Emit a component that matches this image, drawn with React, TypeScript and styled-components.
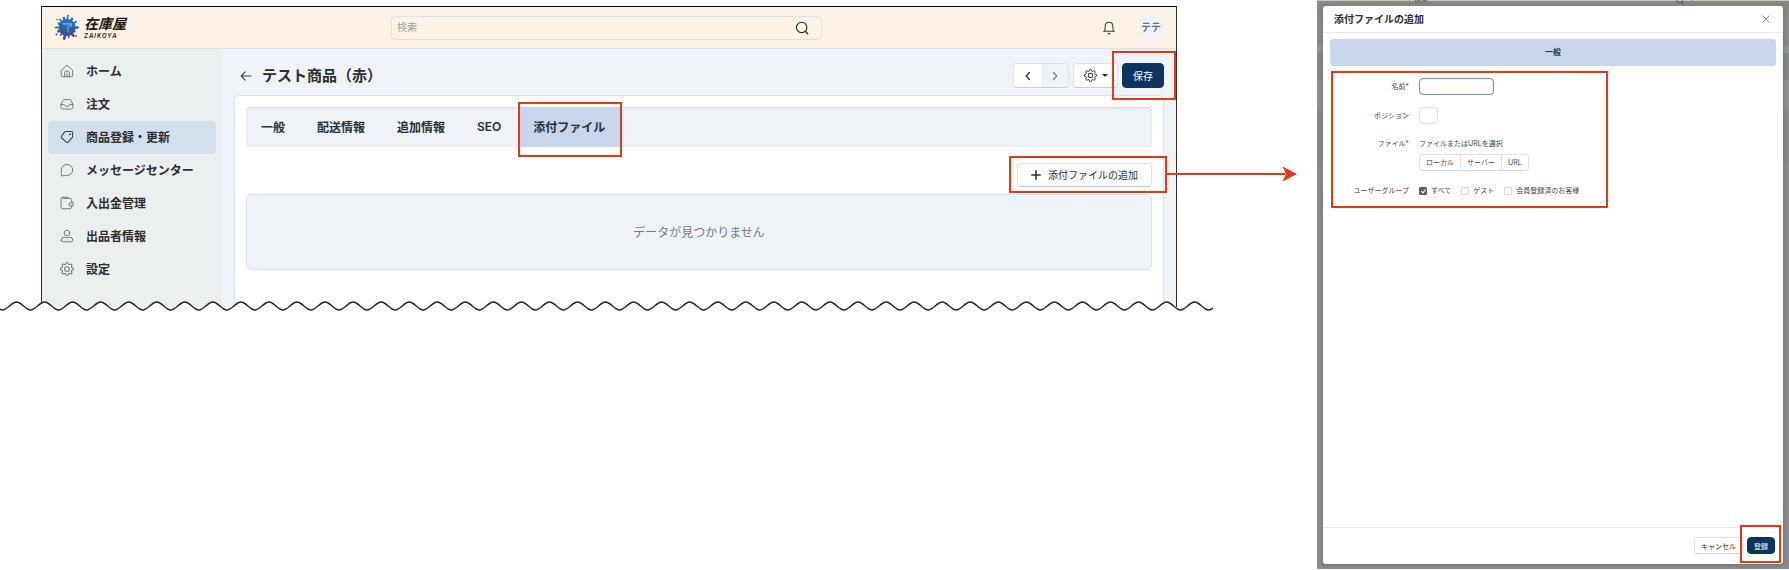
import React from "react";
import styled, { createGlobalStyle, css } from "styled-components";
import { BsGear } from "react-icons/bs";

const accent = "#e03a1b";
const navy = "#0b355f";
const line = "#dce1ee";
const ink = "#2b2d30";

const GlobalStyle = createGlobalStyle`
  *, *::before, *::after { box-sizing: border-box; }
  body {
    margin: 0;
    background: #fff;
    color: ${ink};
    font-family: Inter, "Noto Sans CJK JP", sans-serif;
    font-size: 12px;
  }
  button, input { font: inherit; color: inherit; margin: 0; }
  button { cursor: pointer; }
`;

const Page = styled.div`
  display: grid;
  grid-template-columns: minmax(0, 1213fr) minmax(0, 472fr);
  column-gap: 104px;
  min-height: 100vh;
  padding-bottom: 1px;
`;

/* ---------- shared ---------- */

const Callout = styled.span<{ $inset: string }>`
  position: absolute;
  inset: ${(p) => p.$inset};
  border: 2px solid ${accent};
  pointer-events: none;
  z-index: 3;
`;

const Marked = styled.div`
  position: relative;
  display: flex;
`;

const Icon = styled.svg<{ $size?: number }>`
  width: ${(p) => p.$size ?? 14}px;
  height: ${(p) => p.$size ?? 14}px;
  flex: none;
  fill: none;
  stroke: currentColor;
  stroke-width: 1;
  stroke-linecap: round;
  stroke-linejoin: round;
`;

const buttonBase = css`
  display: flex;
  align-items: center;
  justify-content: center;
  padding: 0;
  white-space: nowrap;
  background: #fff;
  border: 1px solid ${line};
`;

/* ---------- admin screen ---------- */

const Stage = styled.section`
  position: relative;
  align-self: start;
  padding: 6px 36px 4px 41px;
`;

const Screen = styled.div`
  border: 1px solid #2e2b28;
  border-top-color: #000;
  border-bottom: 0;
  background: #eff3f7;
`;

const TopBar = styled.header`
  display: grid;
  grid-template-columns: 337fr 431fr 342fr;
  align-items: center;
  height: 42px;
  padding: 0 12px;
  background: #fcf3e6;
  border-bottom: 1px solid ${line};
`;

const Brand = styled.a`
  display: flex;
  align-items: center;
  gap: 4px;
  color: #1c1512;
  text-decoration: none;
`;

const BrandText = styled.span`
  display: flex;
  flex-direction: column;
  font-style: italic;
`;

const BrandName = styled.span`
  font-size: 14px;
  line-height: 17px;
  font-weight: 700;
`;

const BrandSub = styled.span`
  font-size: 6px;
  line-height: 8px;
  font-weight: 600;
  letter-spacing: 1px;
`;

const SearchBox = styled.form`
  display: flex;
  align-items: center;
  height: 24px;
  border: 1px solid ${line};
  border-radius: 4px;
`;

const SearchInput = styled.input`
  flex: 1;
  min-width: 0;
  height: 22px;
  padding: 0 5px 2px;
  border: 0;
  outline: 0;
  background: none;
  font-size: 10px;
  &::placeholder { color: #a2a09c; opacity: 1; }
`;

const IconButton = styled.button`
  display: flex;
  align-items: center;
  padding: 0;
  border: 0;
  background: none;
  color: #3a3d40;
`;

const SearchButton = styled(IconButton)`
  margin-right: 12px;
  color: #1f1f1f;
`;

const TopActions = styled.div`
  display: flex;
  justify-content: flex-end;
  align-items: center;
  gap: 22px;
`;

const Avatar = styled.button`
  width: 26px;
  height: 26px;
  padding: 0 0 2px;
  border: 0;
  border-radius: 50%;
  background: #eff3f7;
  color: #6b6d70;
  font-size: 10px;
  font-weight: 600;
  line-height: 24px;
`;

const Workspace = styled.div`
  display: flex;
`;

const Sidebar = styled.nav`
  flex: none;
  width: 180px;
  padding: 6px;
  background: #ebefef;
`;

const NavItem = styled.a<{ $active?: boolean }>`
  display: flex;
  align-items: center;
  gap: 12px;
  height: 33px;
  padding: 0 12px 2px;
  border-radius: 4px;
  color: ${ink};
  font-weight: 600;
  white-space: nowrap;
  text-decoration: none;
  background: ${(p) => (p.$active ? "#d4dfec" : "none")};
  svg { color: ${(p) => (p.$active ? "#33373c" : "#66696c")}; }
`;

const Main = styled.main`
  flex: 1;
  min-width: 0;
  padding: 0 12px;
`;

const TitleRow = styled.div`
  display: flex;
  align-items: center;
  gap: 10px;
  padding: 14px 0 7px 6px;
`;

const Title = styled.h1`
  flex: 1;
  margin: 0;
  font-size: 15px;
  line-height: 25px;
  font-weight: 600;
`;

const Controls = styled.div`
  display: flex;
  gap: 4px;
`;

const Pager = styled.div`
  display: flex;
`;

const PageButton = styled.button`
  ${buttonBase}
  width: 28px;
  height: 25px;
  border-bottom-color: #c3cce0;
  &:first-child { border-radius: 4px 0 0 4px; border-right: 0; }
  &:last-child { border-radius: 0 4px 4px 0; background: #eff3f7; border-left: 0; color: #7b7e82; }
`;

const GearButton = styled.button`
  ${buttonBase}
  gap: 5px;
  width: 45px;
  height: 25px;
  border-radius: 4px;
  border-bottom-color: #c3cce0;
`;

const Caret = styled.span`
  border: 3px solid transparent;
  border-top-color: currentColor;
  border-bottom: 0;
`;

const PrimaryButton = styled.button<{ $small?: boolean }>`
  ${buttonBase}
  width: ${(p) => (p.$small ? 28 : 42)}px;
  height: ${(p) => (p.$small ? 17 : 25)}px;
  padding-bottom: ${(p) => (p.$small ? 0 : 1)}px;
  border-color: ${navy};
  border-radius: 4px;
  background: ${navy};
  color: #fff;
  font-size: ${(p) => (p.$small ? 7 : 10)}px;
`;

const Card = styled.section`
  padding: 11px 11px 37px 11px;
  background: #fff;
  border: 1px solid ${line};
  border-bottom: 0;
  border-radius: 5px 5px 0 0;
`;

const Tabs = styled.div`
  display: flex;
  height: 40px;
  border-radius: 4px;
  background: #eff3f7;
  box-shadow: inset 0 1px 2px #d3d9e2, inset 0 0 1px #d3d9e2;
`;

const Tab = styled.button<{ $active?: boolean }>`
  height: 40px;
  padding: 0 17px 2px 15px;
  border: 0;
  border-radius: 3px;
  background: ${(p) => (p.$active ? "#c8d5ec" : "none")};
  font-weight: 600;
  white-space: nowrap;
`;

const AddRow = styled.div`
  display: flex;
  justify-content: flex-end;
  padding: 16px 0 7px;
`;

const AddButton = styled.button`
  ${buttonBase}
  gap: 7px;
  width: 135px;
  height: 24px;
  padding-bottom: 1px;
  border-radius: 4px;
  border-bottom-color: #bccbe2;
  font-size: 10px;
`;

const Arrow = styled.svg`
  position: absolute;
  left: calc(100% + 15px);
  top: 3px;
  width: 130px;
  height: 16px;
  z-index: 3;
`;

const Empty = styled.p`
  display: flex;
  align-items: center;
  justify-content: center;
  height: 76px;
  margin: 0;
  padding-bottom: 2px;
  border: 1px solid ${line};
  border-radius: 5px;
  background: #eff3f7;
  color: #77797c;
`;

const TornEdge = styled.svg`
  position: absolute;
  left: 0;
  bottom: 0;
  width: 100%;
  height: 10px;
  z-index: 2;
`;

/* ---------- dialog ---------- */

const Backdrop = styled.section`
  position: relative;
  display: flex;
  padding: 6px 6px 5px;
  background: linear-gradient(
    #c9c9c9 1px, #8d897f 1px, #8d897f 14px, #8a8b8f 14px, #8a8b8f 46px,
    #959595 46px, #959595 53px, #858689 53px, #858689 80px, #8f8f8f 80px,
    #8f8f8f 111px, #87888b 111px, #87888b 162px, #8c8c8c 162px
  );
`;

const DimmedSearch = styled.div`
  position: absolute;
  top: 0;
  left: 92px;
  right: 96px;
  display: flex;
  align-items: flex-end;
  justify-content: space-between;
  height: 5px;
  padding: 0 8px 0 4px;
  overflow: hidden;
  border: 1px solid #878a90;
  border-top: 0;
  border-radius: 0 0 3px 3px;
  color: #68655f;
  font-size: 7px;
  line-height: 9px;
  svg { color: #3a3936; }
`;

const Dialog = styled.div`
  position: relative;
  flex: 1;
  min-width: 0;
  display: flex;
  flex-direction: column;
  background: #fff;
  border-radius: 3px;
  box-shadow: 0 1px 4px #55555599;
`;

const DialogHead = styled.header`
  display: flex;
  align-items: center;
  justify-content: space-between;
  height: 27px;
  padding: 0 13px 0 11px;
  border-bottom: 1px solid #e6e9f1;
`;

const DialogTitle = styled.h2`
  margin: 0;
  padding-bottom: 1px;
  font-size: 10px;
  font-weight: 600;
`;

const DialogBody = styled.div`
  flex: 1;
  padding: 6px 7px;
`;

const Section = styled.h3`
  margin: 0 0 5px;
  border-radius: 3px;
  background: #c9d6ed;
  font-size: 8px;
  line-height: 27px;
  font-weight: 600;
  text-align: center;
`;

const Form = styled.form`
  display: flex;
  flex-direction: column;
  gap: 12px;
  width: 277px;
  margin-left: 1px;
  padding: 5px 0 7px;
  border: 2px solid ${accent};
  color: #45474a;
  font-size: 7px;
`;

const Field = styled.div`
  display: flex;
  gap: 10px;
`;

const FieldLabel = styled.label<{ $line: number }>`
  width: 76px;
  line-height: ${(p) => p.$line}px;
  text-align: right;
  white-space: nowrap;
`;

const Required = styled.span`
  color: #e0324b;
`;

const TextInput = styled.input<{ $tiny?: boolean }>`
  width: ${(p) => (p.$tiny ? 19 : 75)}px;
  height: 17px;
  padding: 0 3px;
  border: 1px solid ${(p) => (p.$tiny ? line : "#7f93b0")};
  border-radius: 4px;
  outline: 0;
  box-shadow: ${(p) => (p.$tiny ? "none" : "inset 0 0 1px #7f93b0")};
`;

const FileChoice = styled.div`
  display: flex;
  flex-direction: column;
  gap: 3px;
  line-height: 15px;
`;

const Segments = styled.div`
  display: flex;
`;

const Segment = styled.button`
  ${buttonBase}
  height: 17px;
  padding: 0 6px;
  border-bottom-color: #cdd5e6;
  & + & { border-left: 0; }
  &:first-child { border-radius: 4px 0 0 4px; }
  &:last-child { border-radius: 0 4px 4px 0; }
`;

const Options = styled.div`
  display: flex;
  gap: 10px;
  line-height: 16px;
`;

const Option = styled.label`
  display: flex;
  align-items: center;
  gap: 4px;
  white-space: nowrap;
`;

const Checkbox = styled.input`
  appearance: none;
  position: relative;
  width: 8px;
  height: 8px;
  border: 1px solid #d2daea;
  border-radius: 1px;
  &:checked { background: #5e5e60; border-color: #5e5e60; }
  &:checked::after {
    content: "";
    position: absolute;
    left: 2px;
    top: 0;
    width: 3px;
    height: 5px;
    border: solid #fff;
    border-width: 0 1px 1px 0;
    transform: rotate(40deg);
  }
`;

const DialogFoot = styled.footer`
  display: flex;
  justify-content: flex-end;
  gap: 4px;
  padding: 9px 8px 10px;
  border-top: 1px solid #e6e9f1;
`;

const CancelButton = styled.button`
  ${buttonBase}
  height: 17px;
  width: 49px;
  border-radius: 4px;
  border-bottom-color: #cdd5e6;
  font-size: 7px;
`;

/* ---------- drawings ---------- */

const spikes: [number, number][] = [
  [0, 10.5], [28, 9], [52, 10.5], [80, 10], [104, 11.5], [130, 10], [156, 9.5],
  [180, 11.5], [206, 9], [228, 11], [252, 10], [274, 12], [300, 10], [328, 11],
];

const Splash = () => (
  <svg width="26" height="27" viewBox="-13 -13.5 26 27" aria-hidden="true">
    <defs>
      <linearGradient id="splash" gradientUnits="userSpaceOnUse" x1="0" y1="-12" x2="0" y2="12">
        <stop offset="0.3" stopColor="#1b73ba" />
        <stop offset="0.7" stopColor="#3f4f9a" />
      </linearGradient>
    </defs>
    <g stroke="url(#splash)" fill="url(#splash)" strokeLinecap="round">
      <circle r="8.6" stroke="none" />
      {spikes.map(([deg, r], i) => {
        const a = (deg * Math.PI) / 180;
        return (
          <path
            key={deg}
            strokeWidth={i % 2 ? 1.6 : 2.6}
            d={`M${Math.cos(a) * 5} ${Math.sin(a) * 5}L${Math.cos(a) * r} ${Math.sin(a) * r}`}
          />
        );
      })}
      <circle cx="-10" cy="-8" r="0.8" stroke="none" />
      <circle cx="-10.5" cy="7" r="1" stroke="none" />
      <circle cx="9" cy="8.5" r="0.9" stroke="none" />
    </g>
    <path d="M-4.5 -4H4.5V-1.5H1V5" fill="none" stroke="#8fbbe0" strokeWidth="0.9" />
    <path d="M-4 -3.2H4" stroke="#4f97d0" strokeWidth="1.6" />
  </svg>
);

const HomeIcon = () => (
  <Icon viewBox="0 0 16 16">
    <path d="M1.5 7.2 6.8 2.3Q8 1.2 9.2 2.3L14.5 7.2V13Q14.5 14.5 13 14.5H3Q1.5 14.5 1.5 13Z" />
    <path d="M5.3 14.2V9.8Q5.3 8.2 6.8 8.2H9.2Q10.7 8.2 10.7 9.8V14.2M8 10.5V14.2" />
  </Icon>
);
const InboxIcon = () => (
  <Icon viewBox="0 0 16 16">
    <path d="M1.2 8.5 3.4 3.8Q3.8 3 4.8 3H11.2Q12.2 3 12.6 3.8L14.8 8.5V12Q14.8 13.8 13 13.8H3Q1.2 13.8 1.2 12ZM1.2 8.5H4.6Q5.2 8.5 5.4 9.2Q6 10.8 8 10.8T10.6 9.2Q10.8 8.5 11.4 8.5H14.8" />
  </Icon>
);
const TagIcon = () => (
  <Icon viewBox="0 0 16 16">
    <path
      strokeWidth="1.2"
      d="M6.4 1.8H13Q14.4 1.8 14.4 3.2V7.4Q14.4 8.2 13.8 8.8L9.2 13.8Q8.2 14.8 7.2 13.8L1.8 8.9Q1 8.1 1.8 7.2L5 2.5Q5.5 1.8 6.4 1.8Z"
    />
    <circle cx="11.4" cy="4.9" r="0.5" fill="currentColor" />
  </Icon>
);
const ChatIcon = () => (
  <Icon viewBox="0 0 16 16">
    <path d="M1.5 14.3V8A6.5 6.3 0 1 1 8 14.3Z" />
  </Icon>
);
const WalletIcon = () => (
  <Icon viewBox="0 0 16 16">
    <path d="M13.2 6V4.2Q13.2 2.8 11.8 2.8H9.6M13.2 12.4Q13.2 14.6 11.4 14.6H3Q1.2 14.6 1.2 12.8V3Q1.2 1.4 2.8 1.4H8.6Q9.6 1.4 9.6 2.4V2.8M3.6 2.8H9.6" />
    <path d="M15 7.4V11.6H12.4Q10.2 11.6 10.2 9.5T12.4 7.4ZM12.8 9.5H13" />
  </Icon>
);
const PersonIcon = () => (
  <Icon viewBox="0 0 16 16">
    <circle cx="8" cy="4.6" r="3.2" />
    <path d="M1.4 13Q1.4 9.4 4.8 9.4Q8 11 11.2 9.4Q14.6 9.4 14.6 13Q14.6 14.6 13 14.6H3Q1.4 14.6 1.4 13Z" />
  </Icon>
);
const SearchIcon = ({ size }: { size?: number }) => (
  <Icon viewBox="0 0 16 16" $size={size}>
    <circle cx="7.6" cy="7.4" r="6" strokeWidth="1.2" />
    <path d="M12 12 14.6 14.6" strokeWidth="1.4" />
  </Icon>
);
const BellIcon = () => (
  <Icon viewBox="0 0 16 16" $size={14}>
    <path d="M1.8 11.8H14.2M3 11.6Q3.6 9.6 3.6 6.4Q3.6 1.4 8 1.4T12.4 6.4Q12.4 9.6 13 11.6" strokeWidth="1.2" />
    <path d="M7 14.4H9" strokeWidth="1.6" />
  </Icon>
);
const BackIcon = () => (
  <Icon viewBox="0 0 12 12" $size={12}>
    <path d="M11 6H1.5M5.2 1.8 1.2 6l4 4.2" strokeWidth="1.1" />
  </Icon>
);
const Chevron = ({ right }: { right?: boolean }) => (
  <Icon viewBox="0 0 10 10" $size={10}>
    <path d={right ? "M3.5 1.5 6.8 5 3.5 8.5" : "M6.5 1.5 3.2 5 6.5 8.5"} strokeWidth="1.3" />
  </Icon>
);
const PlusIcon = () => (
  <Icon viewBox="0 0 10 10" $size={10}>
    <path d="M5 .8V9.2M.8 5H9.2" strokeWidth="1.5" />
  </Icon>
);
const CloseIcon = () => (
  <Icon viewBox="0 0 8 8" $size={8}>
    <path d="M.8 .8 7.2 7.2M7.2 .8.8 7.2" strokeWidth="0.6" />
  </Icon>
);

const wave = "M-11.5 1" + "c5 0 9 8 14 8s9-8 14.05-8".repeat(140);

const navItems = [
  { label: "ホーム", icon: <HomeIcon /> },
  { label: "注文", icon: <InboxIcon /> },
  { label: "商品登録・更新", icon: <TagIcon />, active: true },
  { label: "メッセージセンター", icon: <ChatIcon /> },
  { label: "入出金管理", icon: <WalletIcon /> },
  { label: "出品者情報", icon: <PersonIcon /> },
  { label: "設定", icon: <BsGear size={14} /> },
];

const tabs = ["一般", "配送情報", "追加情報", "SEO"];

export default function App() {
  return (
    <Page lang="ja">
      <GlobalStyle />
      <Stage>
        <Screen>
          <TopBar>
            <Brand href="#">
              <Splash />
              <BrandText>
                <BrandName>在庫屋</BrandName>
                <BrandSub>ZAIKOYA</BrandSub>
              </BrandText>
            </Brand>
            <SearchBox>
              <SearchInput type="text" placeholder="検索" aria-label="検索" />
              <SearchButton type="button" aria-label="検索">
                <SearchIcon />
              </SearchButton>
            </SearchBox>
            <TopActions>
              <IconButton type="button" aria-label="通知">
                <BellIcon />
              </IconButton>
              <Avatar type="button">テテ</Avatar>
            </TopActions>
          </TopBar>
          <Workspace>
            <Sidebar>
              {navItems.map((n) => (
                <NavItem key={n.label} href="#" $active={n.active}>
                  {n.icon}
                  {n.label}
                </NavItem>
              ))}
            </Sidebar>
            <Main>
              <TitleRow>
                <IconButton type="button" aria-label="戻る">
                  <BackIcon />
                </IconButton>
                <Title>テスト商品（赤）</Title>
                <Controls>
                  <Pager>
                    <PageButton type="button" aria-label="前へ">
                      <Chevron />
                    </PageButton>
                    <PageButton type="button" aria-label="次へ">
                      <Chevron right />
                    </PageButton>
                  </Pager>
                  <GearButton type="button" aria-label="操作">
                    <BsGear size={13} />
                    <Caret />
                  </GearButton>
                  <Marked>
                    <PrimaryButton type="button">保存</PrimaryButton>
                    <Callout $inset="-12px -12px -12px -10px" />
                  </Marked>
                </Controls>
              </TitleRow>
              <Card>
                <Tabs>
                  {tabs.map((t) => (
                    <Tab key={t} type="button">
                      {t}
                    </Tab>
                  ))}
                  <Marked>
                    <Tab type="button" $active>
                      添付ファイル
                    </Tab>
                    <Callout $inset="-5px 0 -10px 0" />
                  </Marked>
                </Tabs>
                <AddRow>
                  <Marked>
                    <AddButton type="button">
                      <PlusIcon />
                      添付ファイルの追加
                    </AddButton>
                    <Callout $inset="-7px -15px -6px -8px" />
                    <Arrow viewBox="0 0 130 16" aria-hidden="true">
                      <path d="M0 8H118" stroke={accent} strokeWidth="2" />
                      <path d="M130 8 115.5 .5 119 8 115.5 15.5Z" fill={accent} />
                    </Arrow>
                  </Marked>
                </AddRow>
                <Empty>データが見つかりません</Empty>
              </Card>
            </Main>
          </Workspace>
        </Screen>
        <TornEdge aria-hidden="true">
          <path d={wave + "V20H-20Z"} fill="#fff" />
          <path d={wave} fill="none" stroke="#26221f" strokeWidth="1.4" />
        </TornEdge>
      </Stage>

      <Backdrop>
        <DimmedSearch aria-hidden="true">
          <span>検索</span>
          <SearchIcon size={8} />
        </DimmedSearch>
        <Dialog role="dialog" aria-label="添付ファイルの追加">
          <DialogHead>
            <DialogTitle>添付ファイルの追加</DialogTitle>
            <IconButton type="button" aria-label="閉じる">
              <CloseIcon />
            </IconButton>
          </DialogHead>
          <DialogBody>
            <Section>一般</Section>
            <Form>
              <Field>
                <FieldLabel $line={17} htmlFor="name">
                  名前<Required>*</Required>
                </FieldLabel>
                <TextInput id="name" type="text" autoFocus />
              </Field>
              <Field>
                <FieldLabel $line={17} htmlFor="position">
                  ポジション
                </FieldLabel>
                <TextInput id="position" type="text" $tiny />
              </Field>
              <Field>
                <FieldLabel $line={15} htmlFor="file-local">
                  ファイル<Required>*</Required>
                </FieldLabel>
                <FileChoice>
                  ファイルまたはURLを選択
                  <Segments>
                    <Segment id="file-local" type="button">ローカル</Segment>
                    <Segment type="button">サーバー</Segment>
                    <Segment type="button">URL</Segment>
                  </Segments>
                </FileChoice>
              </Field>
              <Field>
                <FieldLabel $line={16} htmlFor="group-all">
                  ユーザーグループ
                </FieldLabel>
                <Options>
                  <Option>
                    <Checkbox id="group-all" type="checkbox" defaultChecked />
                    すべて
                  </Option>
                  <Option>
                    <Checkbox type="checkbox" />
                    ゲスト
                  </Option>
                  <Option>
                    <Checkbox type="checkbox" />
                    会員登録済のお客様
                  </Option>
                </Options>
              </Field>
            </Form>
          </DialogBody>
          <DialogFoot>
            <CancelButton type="button">キャンセル</CancelButton>
            <Marked>
              <PrimaryButton type="button" $small>
                登録
              </PrimaryButton>
              <Callout $inset="-12px -6px -9px -7px" />
            </Marked>
          </DialogFoot>
        </Dialog>
      </Backdrop>
    </Page>
  );
}
